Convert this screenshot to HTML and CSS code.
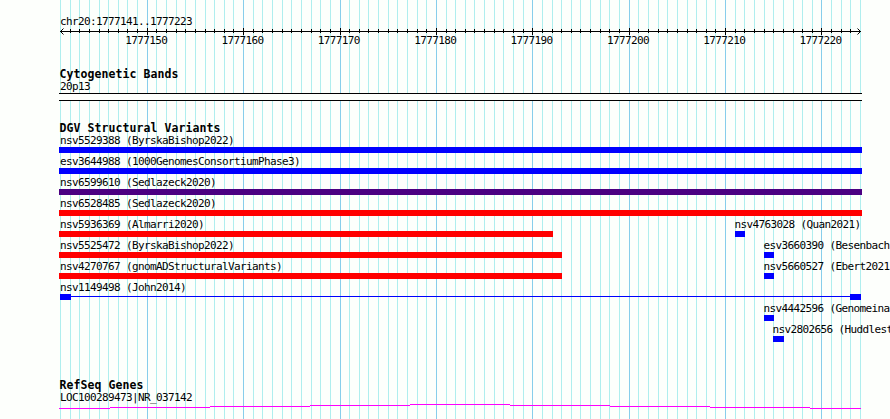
FILE: index.html
```html
<!DOCTYPE html>
<html lang="en">
<head>
<meta charset="utf-8">
<title>chr20:1777141..1777223</title>
<link rel="stylesheet" href="styles.css">
</head>
<body>
<main class="browser">
  <svg class="grid" id="grid" width="890" height="419" shape-rendering="crispEdges" aria-hidden="true"></svg>

  <header class="ruler">
    <div class="label">chr20:1777141..1777223</div>
    <svg class="axis" id="axis" width="803" height="8" aria-hidden="true"></svg>
    <div class="numbers">
      <span>1777150</span><span>1777160</span><span>1777170</span><span>1777180</span><span>1777190</span><span>1777200</span><span>1777210</span><span>1777220</span>
    </div>
  </header>

  <section class="track cyto">
    <h2>Cytogenetic Bands</h2>
    <div class="label">20p13</div>
    <div class="band"></div>
  </section>

  <section class="track variants">
    <h2>DGV Structural Variants</h2>
    <div class="row"><div class="feature full blue"><div class="label">nsv5529388 (ByrskaBishop2022)</div><div class="bar"></div></div></div>
    <div class="row"><div class="feature full blue"><div class="label">esv3644988 (1000GenomesConsortiumPhase3)</div><div class="bar"></div></div></div>
    <div class="row"><div class="feature full purple"><div class="label">nsv6599610 (Sedlazeck2020)</div><div class="bar"></div></div></div>
    <div class="row"><div class="feature full red"><div class="label">nsv6528485 (Sedlazeck2020)</div><div class="bar"></div></div></div>
    <div class="row">
      <div class="feature to-192 red"><div class="label">nsv5936369 (Almarri2020)</div><div class="bar"></div></div>
      <div class="feature small at-211 blue"><div class="label">nsv4763028 (Quan2021)</div><div class="bar"></div></div>
    </div>
    <div class="row">
      <div class="feature to-193 red"><div class="label">nsv5525472 (ByrskaBishop2022)</div><div class="bar"></div></div>
      <div class="feature small at-214 blue"><div class="label">esv3660390 (Besenbach</div><div class="bar"></div></div>
    </div>
    <div class="row">
      <div class="feature to-193 red"><div class="label">nsv4270767 (gnomADStructuralVariants)</div><div class="bar"></div></div>
      <div class="feature small at-214 blue"><div class="label">nsv5660527 (Ebert2021</div><div class="bar"></div></div>
    </div>
    <div class="row"><div class="feature full"><div class="label">nsv1149498 (John2014)</div><div class="span"><i></i><b></b><i></i></div></div></div>
    <div class="row"><div class="feature small alone-214 blue"><div class="label">nsv4442596 (Genomeina</div><div class="bar"></div></div></div>
    <div class="row"><div class="feature wide alone-215 blue"><div class="label">nsv2802656 (Huddlest</div><div class="bar"></div></div></div>
  </section>

  <section class="track genes">
    <h2>RefSeq Genes</h2>
    <div class="label">LOC100289473|NR_037142</div>
    <svg class="gene" width="803" height="6" shape-rendering="crispEdges" fill="#f0f" aria-hidden="true">
      <rect x="0" y="4" width="51" height="1"/><rect x="51" y="3" width="100" height="1"/><rect x="151" y="2" width="100" height="1"/><rect x="251" y="1" width="100" height="1"/><rect x="351" y="0" width="100" height="1"/><rect x="451" y="1" width="100" height="1"/><rect x="551" y="2" width="100" height="1"/><rect x="651" y="3" width="100" height="1"/><rect x="751" y="4" width="51" height="1"/>
    </svg>
  </section>
</main>
<script src="grid.js"></script>
</body>
</html>
```
FILE: styles.css
```css
* { box-sizing: border-box; }

body {
  margin: 0;
  overflow: hidden;
  background: #fdfffc;
  color: #000;
  font: 11px/13px "DejaVu Sans Mono", "Liberation Mono", monospace;
}

.browser {
  position: relative;
  width: 890px;
  height: 419px;
  padding: 15px 0 0 59px;
  overflow: hidden;
}

.browser svg { display: block; }

.browser .grid {
  position: absolute;
  inset: 0;
  z-index: -1;
}

.label {
  height: 13px;
  padding-left: 1px;
  letter-spacing: -0.622px;
  white-space: nowrap;
}

h2 {
  margin: 0;
  padding-left: 0.5px;
  height: 13px;
  font-size: 11.5px;
  line-height: 13px;
  font-weight: bold;
  letter-spacing: 0.077px;
  white-space: nowrap;
}

.ruler { height: 53px; }

.numbers {
  display: grid;
  grid-template-columns: repeat(8, 96.35px);
  margin: -2px 0 0 39px;
  letter-spacing: -0.622px;
  text-align: center;
}

.cyto { height: 54px; }
.cyto .label { margin-top: -1px; }

.band {
  width: 803px;
  height: 8px;
  border: solid #000;
  border-width: 1px 0;
  background: #fdfffc;
}

.variants { height: 257px; }
.variants h2 { margin-bottom: -3px; }

.row {
  display: flex;
  height: 21px;
}

.feature { flex: none; }
.feature .label { height: 15px; padding-top: 2px; }
.bar { height: 6px; }

.blue .bar { background: #00f; }
.red .bar { background: #f00; }
.purple .bar { background: #4b0082; }

.full { width: 803px; }
.to-192 { width: 494px; }
.to-193 { width: 503px; }
.small { width: 10px; }
.wide { width: 11px; }
.small .label, .wide .label { padding-left: 0; margin-left: -0.5px; }
.at-211 { margin-left: 182px; }
.at-214 { margin-left: 202px; }
.alone-214 { margin-left: 705px; }
.alone-215 { margin-left: 714px; }

.span {
  display: flex;
  align-items: flex-start;
  padding: 0 1px;
}
.span i { width: 11px; height: 6px; background: #00f; }
.span b { flex: 1; height: 1px; margin-top: 2px; background: #00f; }

.genes .label { margin-top: -1px; }
```
FILE: grid.js
```js
const NS = "http://www.w3.org/2000/svg";
const grid = document.getElementById("grid");
const axis = document.getElementById("axis");

function rect(parent, x, y, width, height, fill) {
  const el = document.createElementNS(NS, "rect");
  Object.entries({ x, y, width, height, fill }).forEach(([k, v]) => el.setAttribute(k, v));
  parent.appendChild(el);
}

// One line per base, with a stronger one every ten bases.
rect(axis, 1, 3, 801, 1, "#000");
for (let n = 0; n <= 83; n++) {
  const x = Math.round(60 + n * 800 / 83);
  const major = n % 10 === 9;
  rect(grid, x, 0, 1, 419, major ? "#87ceeb" : "#afeeee");
  if (n > 0 && n < 83) rect(axis, x - 59, major ? 0 : 1, 1, major ? 7 : 4, "#000");
}

const heads = document.createElementNS(NS, "path");
heads.setAttribute("d", "M4.5 0.5L1.5 3.5L4.5 6.5M798.5 0.5L801.5 3.5L798.5 6.5");
heads.setAttribute("fill", "none");
heads.setAttribute("stroke", "#000");
axis.appendChild(heads);
```
